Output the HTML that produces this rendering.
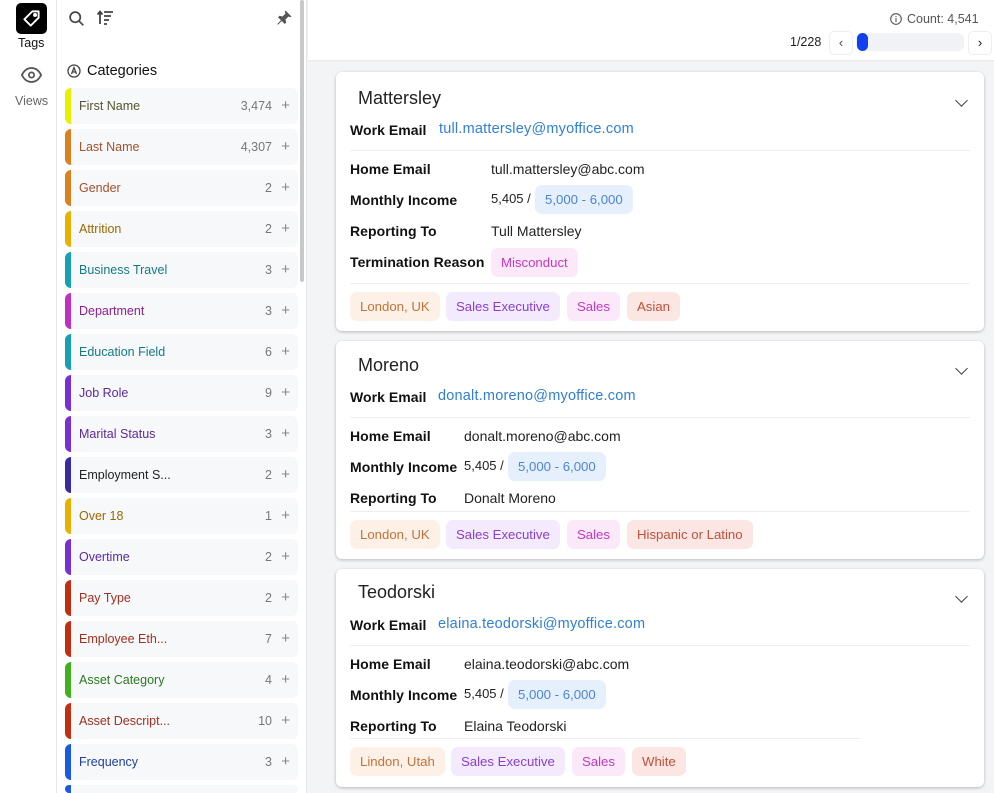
<!DOCTYPE html>
<html style="overflow:hidden;height:793px"><head><meta charset="utf-8"><style>
*{box-sizing:border-box;margin:0;padding:0}
body{width:994px;height:793px;overflow:hidden;font-family:"Liberation Sans",sans-serif;background:#f3f4f6;position:relative;font-size:13px;color:#222}
.a{position:absolute}
.rail{left:0;top:0;width:57px;height:793px;background:#fff;border-right:1px solid #e6e7ea}
.panel{left:57px;top:0;width:250px;height:793px;background:#fff;border-right:1px solid #e6e7ea}
.cat{position:absolute;left:65px;width:233px;height:36px;background:#f7f8fa;border-radius:6px;overflow:hidden}
.cat .bar{position:absolute;left:0;top:0;width:6px;height:36px}
.cat .n{position:absolute;left:14px;top:11px;font-size:12.5px}
.cat .c{position:absolute;right:26px;top:11px;font-size:12.5px;color:#777}
.cat .p{position:absolute;right:8px;top:10px;font-size:15px;line-height:15px;color:#888}
.card{position:absolute;left:336px;width:648px;background:#fff;border-radius:6px;box-shadow:0 1px 3px rgba(0,0,0,.25)}
.t{position:absolute;left:22px;font-size:18px;color:#222}
.lbl{position:absolute;left:14px;font-weight:bold;font-size:14px;letter-spacing:.05px;color:#111}
.v{position:absolute;font-size:14px;color:#222}
.link{color:#2f7fd6;font-size:14.5px;letter-spacing:.2px}
.hr{position:absolute;left:14px;width:620px;height:1px;background:#eceef1}
.chip{position:absolute;height:29px;line-height:29px;padding:0 10px;border-radius:7px;font-size:13.2px}
.o{background:#fdf1e7;color:#c2733a}.pu{background:#f3eafd;color:#8a3fc8}.pk{background:#fbe8f8;color:#c03ac0}.r{background:#fbe6e3;color:#c0503a}.b{background:#e6f0fd;color:#4a84d8}
.chev{position:absolute;right:18px;width:9px;height:9px;border-right:1.6px solid #444;border-bottom:1.6px solid #444;transform:rotate(45deg)}
</style></head><body>
<div class="a rail"></div>
<div class="a" style="left:16px;top:3px;width:31px;height:31px;background:#000;border-radius:5px"></div>
<svg class="a" style="left:22px;top:9px" width="19" height="19" viewBox="0 0 24 24" fill="none" stroke="#fff" stroke-width="2.4" stroke-linejoin="round"><path d="M13 3h8v8L11 21 3 13z"/><circle cx="16.5" cy="7.5" r="1.3" fill="#fff"/></svg>
<div class="a" style="left:18px;top:36px;font-size:12.5px;color:#111">Tags</div>
<svg class="a" style="left:21px;top:66px" width="21" height="18" viewBox="0 0 24 20" fill="none" stroke="#555" stroke-width="2"><path d="M1 10C4 4 8 2 12 2s8 2 11 8c-3 6-7 8-11 8S4 16 1 10z"/><circle cx="12" cy="10" r="3"/></svg>
<div class="a" style="left:15px;top:94px;font-size:12.5px;color:#666">Views</div>

<div class="a panel"></div>
<div class="a" style="left:300px;top:0;width:4px;height:282px;background:#c8c8c8;border-radius:2px"></div>
<svg class="a" style="left:68px;top:10px" width="17" height="17" viewBox="0 0 20 20" fill="none" stroke="#444" stroke-width="2"><circle cx="8.5" cy="8.5" r="6"/><path d="M13 13l5 5"/></svg>
<svg class="a" style="left:97px;top:10px" width="17" height="15" viewBox="0 0 17 15" fill="none" stroke="#444" stroke-width="1.8"><path d="M3 14V2M0.5 4.5L3 1.5 5.5 4.5M7 2h9M7 6h7M7 10h5M7 14h3"/></svg>
<svg class="a" style="left:275px;top:9px" width="18" height="18" viewBox="0 0 24 24" fill="#555"><path d="M14 2l8 8-2 1-2-1-4 4 1 4-2 2-4-4-5 5-1-1 5-5-4-4 2-2 4 1 4-4-1-2z"/></svg>
<svg class="a" style="left:67px;top:64px" width="14" height="14" viewBox="0 0 14 14" fill="none" stroke="#444" stroke-width="1.3"><circle cx="7" cy="7" r="6"/><path d="M4.5 10L7 3.5 9.5 10M5.3 8h3.4"/></svg>
<div class="a" style="left:87px;top:63px;font-size:14.5px;color:#111">Categories</div>

<div class="cat" style="top:88px"><div class="bar" style="background:#e6f000"></div><div class="n" style="color:#555530">First Name</div><div class="c">3,474</div><div class="p">+</div></div>
<div class="cat" style="top:129px"><div class="bar" style="background:#d98020"></div><div class="n" style="color:#a0522d">Last Name</div><div class="c">4,307</div><div class="p">+</div></div>
<div class="cat" style="top:170px"><div class="bar" style="background:#d98020"></div><div class="n" style="color:#a0522d">Gender</div><div class="c">2</div><div class="p">+</div></div>
<div class="cat" style="top:211px"><div class="bar" style="background:#e8b000"></div><div class="n" style="color:#9a6a00">Attrition</div><div class="c">2</div><div class="p">+</div></div>
<div class="cat" style="top:252px"><div class="bar" style="background:#18a0b0"></div><div class="n" style="color:#137a85">Business Travel</div><div class="c">3</div><div class="p">+</div></div>
<div class="cat" style="top:293px"><div class="bar" style="background:#c030c0"></div><div class="n" style="color:#8a2090">Department</div><div class="c">3</div><div class="p">+</div></div>
<div class="cat" style="top:334px"><div class="bar" style="background:#18a0b0"></div><div class="n" style="color:#137a85">Education Field</div><div class="c">6</div><div class="p">+</div></div>
<div class="cat" style="top:375px"><div class="bar" style="background:#7a30d0"></div><div class="n" style="color:#5a2aa0">Job Role</div><div class="c">9</div><div class="p">+</div></div>
<div class="cat" style="top:416px"><div class="bar" style="background:#7a30d0"></div><div class="n" style="color:#5a2aa0">Marital Status</div><div class="c">3</div><div class="p">+</div></div>
<div class="cat" style="top:457px"><div class="bar" style="background:#3a2aa0"></div><div class="n" style="color:#222">Employment S...</div><div class="c">2</div><div class="p">+</div></div>
<div class="cat" style="top:498px"><div class="bar" style="background:#e8b000"></div><div class="n" style="color:#9a6a00">Over 18</div><div class="c">1</div><div class="p">+</div></div>
<div class="cat" style="top:539px"><div class="bar" style="background:#7a30d0"></div><div class="n" style="color:#5a2aa0">Overtime</div><div class="c">2</div><div class="p">+</div></div>
<div class="cat" style="top:580px"><div class="bar" style="background:#c03010"></div><div class="n" style="color:#a03020">Pay Type</div><div class="c">2</div><div class="p">+</div></div>
<div class="cat" style="top:621px"><div class="bar" style="background:#c03010"></div><div class="n" style="color:#a03020">Employee Eth...</div><div class="c">7</div><div class="p">+</div></div>
<div class="cat" style="top:662px"><div class="bar" style="background:#40b020"></div><div class="n" style="color:#2a7a20">Asset Category</div><div class="c">4</div><div class="p">+</div></div>
<div class="cat" style="top:703px"><div class="bar" style="background:#c03010"></div><div class="n" style="color:#a03020">Asset Descript...</div><div class="c">10</div><div class="p">+</div></div>
<div class="cat" style="top:744px"><div class="bar" style="background:#1a5ae0"></div><div class="n" style="color:#2040a0">Frequency</div><div class="c">3</div><div class="p">+</div></div>
<div class="cat" style="top:785px;height:8px"><div class="bar" style="background:#1a5ae0;height:8px"></div></div>

<div class="a" style="left:308px;top:0;width:686px;height:60px;background:#fff;box-shadow:0 1px 2px rgba(0,0,0,.06)"></div>
<svg class="a" style="left:890px;top:13px" width="12" height="12" viewBox="0 0 12 12" fill="none" stroke="#555" stroke-width="1.1"><circle cx="6" cy="6" r="5.3"/><path d="M6 5v4M6 3v1"/></svg>
<div class="a" style="left:907px;top:12px;font-size:12.5px;color:#555">Count: 4,541</div>
<div class="a" style="left:790px;top:35px;font-size:12.5px;color:#222">1/228</div>
<div class="a" style="left:829px;top:31px;width:24px;height:24px;border:1px solid #eee;border-radius:5px;text-align:center;line-height:22px;color:#444">‹</div>
<div class="a" style="left:856px;top:33px;width:108px;height:18px;background:#f1f2f5;border-radius:6px"></div>
<div class="a" style="left:857px;top:33px;width:11px;height:18px;background:#1240f0;border-radius:6px"></div>
<div class="a" style="left:968px;top:31px;width:24px;height:24px;border:1px solid #eee;border-radius:5px;text-align:center;line-height:22px;color:#111">›</div>

<!-- card 1 -->
<div class="card" style="top:72px;height:259px">
<div class="t" style="top:16px">Mattersley</div><div class="chev" style="top:24px"></div>
<div class="lbl" style="top:50px">Work Email</div><div class="v link" style="left:103px;top:49px">tull.mattersley@myoffice.com</div>
<div class="hr" style="top:78px"></div>
<div class="lbl" style="top:89px">Home Email</div><div class="v" style="left:155px;top:89px">tull.mattersley@abc.com</div>
<div class="lbl" style="top:120px">Monthly Income</div><div class="v" style="left:155px;top:119px;font-size:13px">5,405 /</div><div class="chip b" style="left:199px;top:113px">5,000 - 6,000</div>
<div class="lbl" style="top:151px">Reporting To</div><div class="v" style="left:155px;top:151px">Tull Mattersley</div>
<div class="lbl" style="top:182px">Termination Reason</div><div class="chip pk" style="left:155px;top:176px">Misconduct</div>
<div class="hr" style="top:211px"></div>
<div class="chip o" style="left:14px;top:220px">London, UK</div><div class="chip pu" style="left:110px;top:220px">Sales Executive</div><div class="chip pk" style="left:231px;top:220px">Sales</div><div class="chip r" style="left:291px;top:220px">Asian</div>
</div>
<!-- card 2 -->
<div class="card" style="top:341px;height:218px">
<div class="t" style="top:14px">Moreno</div><div class="chev" style="top:23px"></div>
<div class="lbl" style="top:48px">Work Email</div><div class="v link" style="left:102px;top:47px">donalt.moreno@myoffice.com</div>
<div class="hr" style="top:76px"></div>
<div class="lbl" style="top:87px">Home Email</div><div class="v" style="left:128px;top:87px">donalt.moreno@abc.com</div>
<div class="lbl" style="top:118px">Monthly Income</div><div class="v" style="left:128px;top:117px;font-size:13px">5,405 /</div><div class="chip b" style="left:172px;top:111px">5,000 - 6,000</div>
<div class="lbl" style="top:149px">Reporting To</div><div class="v" style="left:128px;top:149px">Donalt Moreno</div>
<div class="hr" style="top:170px"></div>
<div class="chip o" style="left:14px;top:179px">London, UK</div><div class="chip pu" style="left:110px;top:179px">Sales Executive</div><div class="chip pk" style="left:231px;top:179px">Sales</div><div class="chip r" style="left:291px;top:179px">Hispanic or Latino</div>
</div>
<!-- card 3 -->
<div class="card" style="top:569px;height:218px">
<div class="t" style="top:13px">Teodorski</div><div class="chev" style="top:23px"></div>
<div class="lbl" style="top:48px">Work Email</div><div class="v link" style="left:102px;top:47px">elaina.teodorski@myoffice.com</div>
<div class="hr" style="top:76px"></div>
<div class="lbl" style="top:87px">Home Email</div><div class="v" style="left:128px;top:87px">elaina.teodorski@abc.com</div>
<div class="lbl" style="top:118px">Monthly Income</div><div class="v" style="left:128px;top:117px;font-size:13px">5,405 /</div><div class="chip b" style="left:172px;top:111px">5,000 - 6,000</div>
<div class="lbl" style="top:149px">Reporting To</div><div class="v" style="left:128px;top:149px">Elaina Teodorski</div>
<div class="hr" style="top:169px;width:510px"></div>
<div class="chip o" style="left:14px;top:178px">Lindon, Utah</div><div class="chip pu" style="left:115px;top:178px">Sales Executive</div><div class="chip pk" style="left:236px;top:178px">Sales</div><div class="chip r" style="left:296px;top:178px">White</div>
</div>
</body></html>
